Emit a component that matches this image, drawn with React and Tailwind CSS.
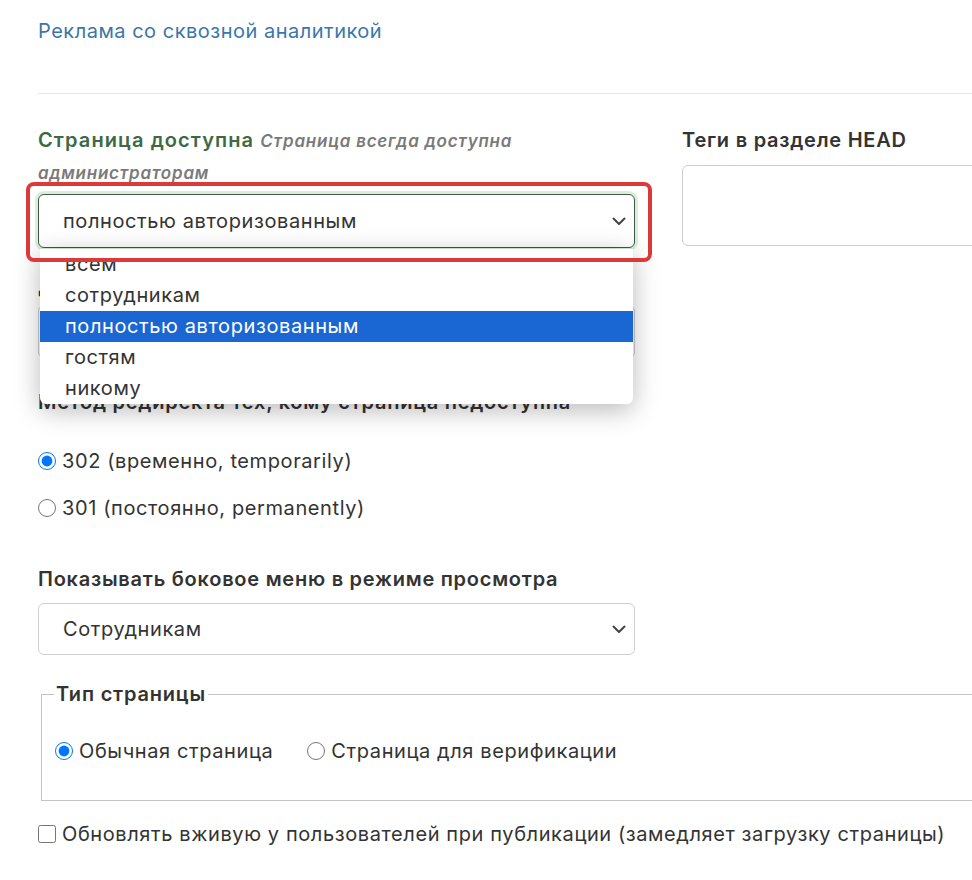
import React from "react";

const options = ["всем", "сотрудникам", "полностью авторизованным", "гостям", "никому"];

function Chevron() {
  return (
    <svg width="14" height="9" viewBox="0 0 14 9" fill="none" className="shrink-0">
      <path d="M1.5 1.5 L7 7 L12.5 1.5" stroke="#444" strokeWidth="2" strokeLinecap="round" strokeLinejoin="round" />
    </svg>
  );
}

function Radio({ checked, label, className = "" }) {
  return (
    <label className={"flex items-center gap-[6px] h-[28px] " + className}>
      <input type="radio" readOnly checked={checked} className="w-[18px] h-[18px] m-0" />
      <span>{label}</span>
    </label>
  );
}

export default function App() {
  return (
    <main
      className="w-full min-h-[880px] overflow-hidden bg-white text-[20px] leading-[28px] tracking-[0.6px] text-[#333]"
      style={{ fontFamily: "Inter, 'Noto Sans', sans-serif" }}
    >
      <div className="pl-[38px] pt-[17px]">
        <a className="block text-[#3b77aa] tracking-[0.5px]">Реклама со сквозной аналитикой</a>

        <hr className="mt-[48px] border-0 border-t border-[#e6e6e6]" />

        <div className="grid grid-cols-[597px_597px] gap-x-[47px]">
          {/* left column */}
          <div>
            <div className="mt-[31px] leading-[31px]">
              <span className="font-semibold tracking-[1.1px] text-[#3d6a45]">Страница доступна </span>
              <span className="text-[17px] font-semibold italic tracking-[0.75px] text-[#7a7a7a]">
                Страница всегда доступна администраторам
              </span>
            </div>

            <div className="relative mt-[5px]">
              <div className="flex h-[54px] items-center justify-between rounded-[6px] border border-[#3e5a46] bg-white pl-[24px] pr-[8px] shadow-[0_0_0_3px_rgba(150,205,150,0.35)]">
                <span>полностью авторизованным</span>
                <Chevron />
              </div>

              {/* highlight */}
              <div className="pointer-events-none absolute left-[-12px] top-[-12px] z-20 h-[80px] w-[626px] rounded-[8px] border-[4px] border-[#dc3a3a]" />

              {/* opened list */}
              <div className="absolute left-[2px] top-[55px] z-10 w-[593px] overflow-hidden rounded-b-[6px] bg-white shadow-[0_6px_26px_rgba(0,0,0,0.28)]">
                {options.map((o) => (
                  <div
                    key={o}
                    className={
                      "h-[31px] pl-[25px] leading-[31px] " +
                      (o === "полностью авторизованным" ? "bg-[#1a66d2] text-white" : "text-[#333]")
                    }
                  >
                    {o}
                  </div>
                ))}
              </div>
            </div>

            {/* field hidden under the list */}
            <div className="mt-[24px] font-semibold tracking-[0.75px]">Доступ по паролю</div>
            <div className="mt-[5px] h-[53px] rounded-[6px] border border-[#cccccc]" />

            <div className="mt-[30px] font-semibold tracking-[0.75px]">Метод редиректа тех, кому страница недоступна</div>

            <Radio checked label="302 (временно, temporarily)" className="mt-[31px]" />
            <Radio checked={false} label="301 (постоянно, permanently)" className="mt-[19px]" />

            <div className="mt-[43px] font-semibold tracking-[0.75px]">Показывать боковое меню в режиме просмотра</div>
            <div className="mt-[10px] flex h-[52px] items-center justify-between rounded-[6px] border border-[#cfcfcf] bg-white pl-[24px] pr-[8px]">
              <span>Сотрудникам</span>
              <Chevron />
            </div>
          </div>

          {/* right column */}
          <div>
            <div className="mt-[31px] leading-[31px] font-semibold tracking-[0.75px]">Теги в разделе HEAD</div>
            <div className="mt-[9px] h-[81px] rounded-[6px] border border-[#cccccc]" />
          </div>
        </div>

        <fieldset className="ml-[3px] mt-[25px] w-[980px] border border-[#c4c4c4] px-[12px] pb-[35px]">
          <legend className="px-[2px] font-semibold tracking-[0.8px]">Тип страницы</legend>
          <div className="mt-[29px] flex items-center">
            <Radio checked label="Обычная страница" className="ml-[1px]" />
            <Radio checked={false} label="Страница для верификации" className="ml-[34px]" />
          </div>
        </fieldset>

        <label className="mt-[19px] flex h-[28px] items-center gap-[6px]">
          <input type="checkbox" readOnly className="w-[18px] h-[18px] m-0" />
          <span className="whitespace-nowrap">Обновлять вживую у пользователей при публикации (замедляет загрузку страницы)</span>
        </label>
      </div>
    </main>
  );
}
